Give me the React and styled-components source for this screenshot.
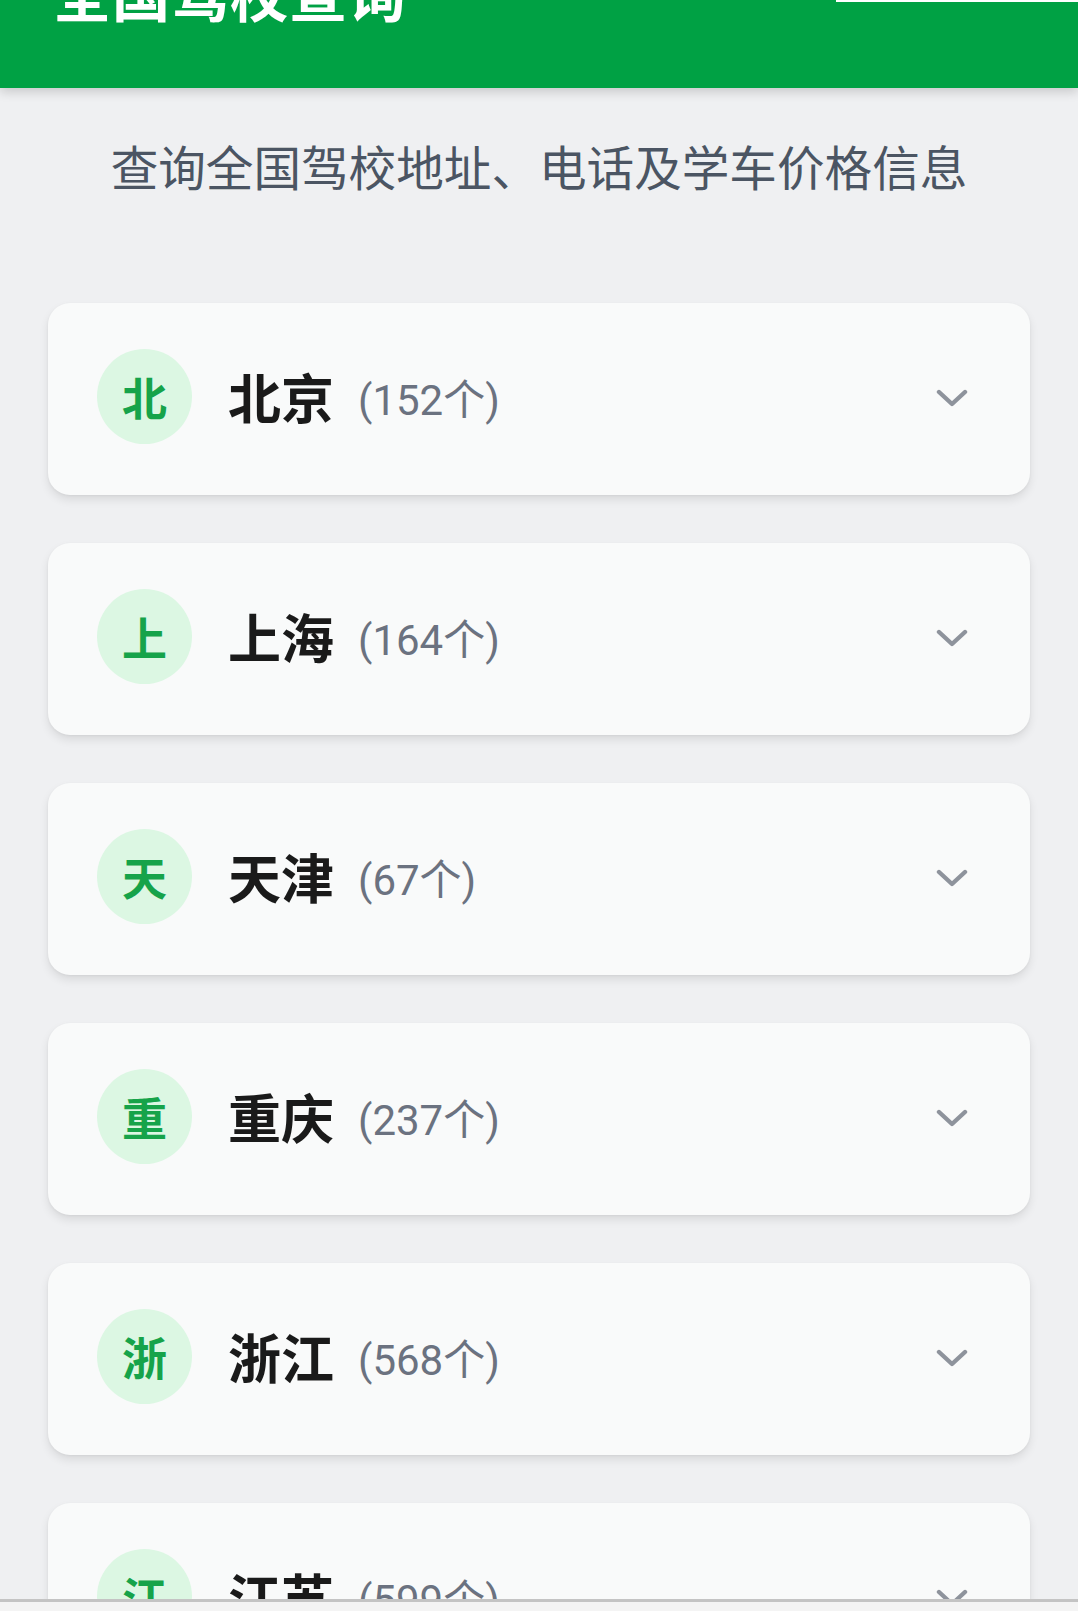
import styled, { createGlobalStyle } from 'styled-components';

const GlobalStyle = createGlobalStyle`
  html, body {
    margin: 0;
    padding: 0;
    background: #eff0f2;
    font-family: 'Noto Sans', 'Noto Sans CJK SC', sans-serif;
    overflow: hidden;
  }
`;

const Page = styled('div')`
  min-height: 1611px;
  background: #eff0f2;
  overflow: hidden;
`;

const Header = styled('header')`
  height: 88px;
  background: #00a144;
  display: flex;
  align-items: flex-start;
  justify-content: space-between;
  padding-left: 53px;
  box-shadow: 0 4px 10px rgba(0, 0, 0, 0.16);
  position: relative;
  z-index: 1;
`;

const Title = styled('h1')`
  margin: -37px 0 0;
  font-size: 58px;
  line-height: 1;
  font-weight: 700;
  color: #ffffff;
  font-family: 'Noto Sans CJK SC', sans-serif;
  letter-spacing: 1px;
`;

const SearchEdge = styled('div')`
  width: 242px;
  height: 2px;
  background: #ffffff;
`;

const Subtitle = styled('p')`
  margin: 43px 0 0;
  text-align: center;
  font-size: 47.6px;
  line-height: 70px;
  color: #4b5563;
  font-family: 'Noto Sans CJK SC', sans-serif;
`;

const List = styled('div')`
  display: flex;
  flex-direction: column;
  gap: 48px;
  padding: 102px 48px 0;
`;

const Card = styled('div')`
  height: 192px;
  box-sizing: border-box;
  background: #f9fafa;
  border-radius: 22px;
  box-shadow: 0 5px 10px rgba(0, 0, 0, 0.09), 0 1px 3px rgba(0, 0, 0, 0.05);
  display: flex;
  align-items: center;
  padding: 0 62px 6px 49px;
`;

const Badge = styled('div')`
  width: 95px;
  height: 95px;
  flex-shrink: 0;
  border-radius: 50%;
  background: #dcf7e3;
  color: #16a34a;
  display: flex;
  align-items: center;
  justify-content: center;
  font-size: 45px;
  font-weight: 700;
  font-family: 'Noto Sans CJK SC', sans-serif;
`;

const Name = styled('span')`
  margin-left: 36px;
  font-size: 53px;
  font-weight: 700;
  color: #1a1a1a;
  font-family: 'Noto Sans CJK SC', sans-serif;
`;

const Count = styled('span')`
  margin-left: 24px;
  font-size: 42px;
  color: #6b7280;
  font-family: Roboto, 'Noto Sans CJK SC', sans-serif;
`;

const Chevron = styled('svg')`
  margin-left: auto;
  width: 32px;
  height: 19px;
  margin-top: 4px;
`;

const BottomBar = styled('div')`
  position: fixed;
  left: 0;
  right: 0;
  bottom: 0;
  height: 9px;
  background: #f4f4f4;
  border-top: 3px solid #c4c4c4;
  z-index: 2;
`;

const provinces = [
  { name: '北京', count: 152 },
  { name: '上海', count: 164 },
  { name: '天津', count: 67 },
  { name: '重庆', count: 237 },
  { name: '浙江', count: 568 },
  { name: '江苏', count: 599 },
];

export default function App() {
  return (
    <Page>
      <GlobalStyle />
      <Header>
        <Title>全国驾校查询</Title>
        <SearchEdge />
      </Header>
      <Subtitle>查询全国驾校地址、电话及学车价格信息</Subtitle>
      <List>
        {provinces.map((p) => (
          <Card key={p.name}>
            <Badge>{p.name[0]}</Badge>
            <Name>{p.name}</Name>
            <Count>({p.count}个)</Count>
            <Chevron viewBox="0 0 32 19" fill="none">
              <path
                d="M3 3 L16 15 L29 3"
                stroke="#8e939c"
                strokeWidth="4.4"
                strokeLinecap="round"
                strokeLinejoin="round"
              />
            </Chevron>
          </Card>
        ))}
      </List>
      <BottomBar />
    </Page>
  );
}
